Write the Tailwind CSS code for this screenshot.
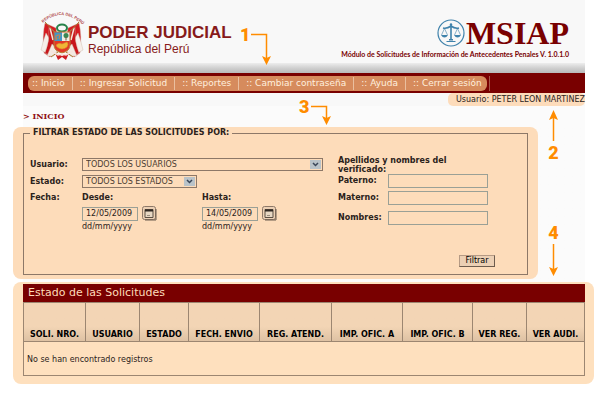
<!DOCTYPE html>
<html lang="es">
<head>
<meta charset="utf-8">
<meta name="viewport" content="width=device-width, initial-scale=1">
<title>MSIAP - Poder Judicial</title>
<script src="https://cdn.jsdelivr.net/npm/@tailwindcss/browser@4"></script>
</head>
<body class="relative min-h-screen bg-white font-['DejaVu_Sans',sans-serif] text-[8px] leading-[10px] text-[#2b221b]">
<div class="pl-[23px] pr-[15px]">
  <header class="flex h-[63px] items-start justify-between bg-[#f8f8f8] pl-[18px] pr-4">
    <div class="flex items-start gap-[5px] pt-[11px]">
      <svg class="h-[50px] w-[42px] overflow-visible" viewBox="0 0 42 50" role="img" aria-label="Escudo del Perú">
        <path id="arc" d="M2 12 Q21 -5 42 14" fill="none"/>
        <text class="font-['Liberation_Sans',sans-serif] text-[4px] font-bold" fill="#b0484a"><textPath href="#arc">REPÚBLICA DEL PERÚ</textPath></text>
        <g stroke="#c9b3a4" stroke-width=".4">
          <path d="M15 17 4 12Q1 24 3 42L9 46 18 38Z" fill="#d51c22"/>
          <path d="M27 17 38 12Q41 24 39 42L33 46 24 38Z" fill="#d51c22"/>
          <path d="M8 27 5 22Q2 30 0 39L7 43Q10 36 12 32Z" fill="#f6efe9"/>
          <path d="M34 27 37 22Q40 30 42 39L35 43Q32 36 30 32Z" fill="#f6efe9"/>
          <path d="M13 20 8 16Q9 30 4 42L10 45 16 35ZM29 20 34 16Q33 30 38 42L32 45 26 35Z" fill="#c8151b"/>
          <path d="M11 33 6 45 13 45 17 38ZM31 33 36 45 29 45 25 38Z" fill="#f3e9e2"/>
        </g>
        <path d="M9 17 12 29M33 17 30 29" stroke="#f3e3da" stroke-width="1.500"/>
        <path d="M4 11 15 23M38 11 27 23M10 46 17 41M32 46 25 41" stroke="#a77b2d" stroke-width="1"/>
        <ellipse cx="21" cy="17" rx="5" ry="3.5" fill="none" stroke="#27824a" stroke-width="2"/>
        <path d="M13 21H29V34Q29 40 21 42Q13 40 13 34Z" fill="#e33726" stroke="#b78436"/>
        <path d="M13.500 21.500H21V30H13.500Z" fill="#4097c6"/>
        <path d="M21 21.500H28.500V30H21Z" fill="#f0eee4"/>
        <path d="M15 28V25L17 24H19L18 28M16 27 15 29" stroke="#c8854c" fill="none" stroke-width="1.200"/>
        <circle cx="25" cy="24.500" r="2.500" fill="#398854"/>
        <path d="M25 26V29.500" stroke="#6d5836"/>
        <path d="M15 34Q18 31 21 33L26 31Q28 33 26 36 21 40 16 36Z" fill="#efb536" stroke="#d8892a" stroke-width=".6"/>
        <path d="M14 42 21 45 28 42 25 49 21 46 17 49Z" fill="#cf1c21"/>
        <path d="M10 40 17 44 21 43 25 44 32 40" stroke="#f6e4dc" stroke-width="1.500" fill="none"/>
      </svg>
      <div class="pt-[13px] font-['Liberation_Sans',sans-serif] text-[#871a1a]">
        <h1 class="text-[17px] leading-[18px] font-bold">PODER JUDICIAL</h1>
        <p class="text-[12px] leading-[15px]">República del Perú</p>
      </div>
    </div>
    <div class="pt-[17px] text-right text-[#790000]">
      <div class="flex items-center justify-end gap-px">
        <svg class="size-[28px]" viewBox="0 0 28 28" fill="none" stroke="#3f82ab" aria-hidden="true">
          <circle cx="14" cy="14" r="13" stroke-width="1.200"/>
          <path d="M14 5V21M6 9Q10 10 14 7Q18 10 22 9" stroke-width="1.600"/>
          <path d="M7.500 9.500 4.500 16M7.500 9.500 10.500 16M20.500 9.500 17.500 16M20.500 9.500 23.500 16" stroke-width=".6"/>
          <path d="M4 16H11Q9.500 18.500 7.500 18.500T4 16ZM17 16H24Q22.500 18.500 20.500 18.500T17 16ZM9.500 22H18.500V23H9.500ZM12 20H16V21.500H12Z" fill="#3f82ab" stroke="none"/>
          <circle cx="14" cy="5.500" r="1.200" fill="#3f82ab" stroke="none"/>
        </svg>
        <span class="font-['Liberation_Serif',serif] text-[32px] leading-[32px] font-bold">MSIAP</span>
      </div>
      <p class="font-['Lato',sans-serif] text-[7px] leading-[10px] font-bold whitespace-nowrap">Módulo de Solicitudes de Información de Antecedentes Penales V. 1.0.1.0</p>
    </div>
  </header>
  <div class="h-[10px] bg-linear-to-b from-[#ededed] via-[#d0d0d0] to-[#b9b9b9]"></div>
  <nav class="flex h-5 items-center bg-[#790000] pl-[5px]">
    <div class="flex h-[15px] items-center rounded-[6px] bg-[#d68b5d] text-[9px] leading-[13px] text-[#fff0df] whitespace-nowrap">
      <a href="#" class="border-r border-[#eabf9f] pr-[7px] pl-1">:: Inicio</a>
      <a href="#" class="border-r border-[#eabf9f] px-[7px]">:: Ingresar Solicitud</a>
      <a href="#" class="border-r border-[#eabf9f] px-[7px]">:: Reportes</a>
      <a href="#" class="border-r border-[#eabf9f] px-[7px]">:: Cambiar contraseña</a>
      <a href="#" class="border-r border-[#eabf9f] px-[7px]">:: Ayuda</a>
      <a href="#" class="pr-[5px] pl-[7px]">:: Cerrar sesión</a>
    </div>
    <div class="ml-[2px] h-[15px] border-r border-[#a8554a]"></div>
  </nav>
  <div class="flex h-[13px] justify-end bg-[#f8f8f8]">
    <p class="rounded-[5px] bg-[#fddcbb] pl-2 leading-[13px]">Usuario: PETER LEON MARTINEZ</p>
  </div>
  <div class="h-[21px] bg-[#fbfbfb] pt-[5px] font-['DejaVu_Serif',serif] font-bold text-[#910f12]">&gt; INICIO</div>
</div>

<main class="pr-[6px] pl-[13px]">
  <div class="mr-[9px] bg-linear-to-r from-transparent from-[10px] to-[#fbfbfb] to-[10px]">
    <form class="mr-[47px] rounded-[8px] bg-[#fddcba] px-[10px] pt-px pb-1">
      <fieldset class="h-[147px] border border-[#8d7868] px-[6px]">
        <legend class="px-[3px] font-bold">FILTRAR ESTADO DE LAS SOLICITUDES POR:</legend>
        <div class="flex">
          <div class="grid w-[308px] shrink-0 grid-cols-[52px_1fr] items-center gap-y-[4px] pt-5">
            <label for="usuario" class="font-bold">Usuario:</label>
            <div class="relative w-[241px]">
              <select id="usuario" class="block h-[13px] w-full appearance-none border border-[#8d7868] pl-[3px] leading-[11px] text-[#4b3c30]"><option>TODOS LOS USUARIOS</option></select>
              <svg class="pointer-events-none absolute top-[2px] right-[2px] h-[9px] w-[11px] bg-[#b9c3c9]" viewBox="0 0 11 9"><path d="M3 3 5.500 5.500 8 3" fill="none" stroke="#3a4658" stroke-width="1.500"/></svg>
            </div>
            <label for="estado" class="font-bold">Estado:</label>
            <div class="relative w-[115px]">
              <select id="estado" class="block h-[13px] w-full appearance-none border border-[#8d7868] pl-[3px] leading-[11px] text-[#4b3c30]"><option>TODOS LOS ESTADOS</option></select>
              <svg class="pointer-events-none absolute top-[2px] right-[2px] h-[9px] w-[11px] bg-[#b9c3c9]" viewBox="0 0 11 9"><path d="M3 3 5.500 5.500 8 3" fill="none" stroke="#3a4658" stroke-width="1.500"/></svg>
            </div>
            <span class="self-start pt-[1px] font-bold">Fecha:</span>
            <div class="flex pt-[1px]">
              <div class="w-[120px]">
                <label for="desde" class="block font-bold">Desde:</label>
                <div class="flex items-center gap-1 pt-[3px]">
                  <input id="desde" value="12/05/2009" class="h-[14px] w-[56px] border border-[#9aa096] px-[3px]">
                  <button type="button" aria-label="Calendario desde"><svg class="size-[15px]" viewBox="0 0 15 15"><rect x=".5" y=".5" width="13" height="13" rx="2" fill="#ecd0b4" stroke="#8d7868"/><path d="M14 3V14H3" fill="none" stroke="#6d5c4e"/><path d="M3 3.500H11V11.500H3Z" fill="#e8d8c4" stroke="#5b4e43"/><path d="M3 4.500H11" stroke="#302822" stroke-width="2"/><path d="M5 9.500H8" stroke="#9b8c7d"/></svg></button>
                </div>
                <p class="pt-[1px]">dd/mm/yyyy</p>
              </div>
              <div>
                <label for="hasta" class="block font-bold">Hasta:</label>
                <div class="flex items-center gap-1 pt-[3px]">
                  <input id="hasta" value="14/05/2009" class="h-[14px] w-[56px] border border-[#9aa096] px-[3px]">
                  <button type="button" aria-label="Calendario hasta"><svg class="size-[15px]" viewBox="0 0 15 15"><rect x=".5" y=".5" width="13" height="13" rx="2" fill="#ecd0b4" stroke="#8d7868"/><path d="M14 3V14H3" fill="none" stroke="#6d5c4e"/><path d="M3 3.500H11V11.500H3Z" fill="#e8d8c4" stroke="#5b4e43"/><path d="M3 4.500H11" stroke="#302822" stroke-width="2"/><path d="M5 9.500H8" stroke="#9b8c7d"/></svg></button>
                </div>
                <p class="pt-[1px]">dd/mm/yyyy</p>
              </div>
            </div>
          </div>
          <div class="pt-[18px]">
            <p class="w-[130px] leading-[9px] font-bold">Apellidos y nombres del verificado:</p>
            <div class="grid grid-cols-[50px_100px] items-center gap-y-[3px]">
              <label for="paterno" class="font-bold">Paterno:</label>
              <input id="paterno" class="h-[14px] border border-[#9aa096] px-[3px]">
              <label for="materno" class="font-bold">Materno:</label>
              <input id="materno" class="h-[14px] border border-[#9aa096] px-[3px]">
              <label for="nombres" class="pt-[3px] font-bold">Nombres:</label>
              <input id="nombres" class="mt-[3px] h-[14px] border border-[#9aa096] px-[3px]">
            </div>
          </div>
        </div>
        <div class="flex justify-end pt-[23px] pr-[26px]">
          <button type="button" class="h-[12px] w-9 border border-t-[#b59a84] border-r-[#6d5c4e] border-b-[#6d5c4e] border-l-[#b59a84] bg-[#ecd0b4] leading-[10px] whitespace-nowrap text-black">Filtrar</button>
        </div>
      </fieldset>
    </form>
    <div class="h-[3px]"></div>
  </div>

  <section class="rounded-[8px] bg-[#fee0be] pt-[2px] pr-[9px] pb-[8px] pl-[10px]">
    <table class="w-full table-fixed border-collapse border border-[#9c8671]">
      <caption class="h-[18px] bg-[#790000] pl-[5px] text-left text-[11px] leading-[18px] text-[#fddcba]">Estado de las Solicitudes</caption>
      <colgroup>
        <col class="w-[62px]"><col class="w-[54px]"><col class="w-[49px]"><col class="w-[71px]"><col class="w-[72px]"><col class="w-[71px]"><col class="w-[70px]"><col class="w-[54px]"><col class="w-[58px]">
      </colgroup>
      <thead>
        <tr class="h-[39px] bg-linear-to-b from-[#f3d5b5] from-60% to-[#dcc0a2] align-bottom whitespace-nowrap text-black">
          <th class="border border-[#9c8671] px-0 pb-px">SOLI. NRO.</th>
          <th class="border border-[#9c8671] px-0 pb-px">USUARIO</th>
          <th class="border border-[#9c8671] px-0 pb-px">ESTADO</th>
          <th class="border border-[#9c8671] px-0 pb-px">FECH. ENVIO</th>
          <th class="border border-[#9c8671] px-0 pb-px">REG. ATEND.</th>
          <th class="border border-[#9c8671] px-0 pb-px">IMP. OFIC. A</th>
          <th class="border border-[#9c8671] px-0 pb-px">IMP. OFIC. B</th>
          <th class="border border-[#9c8671] px-0 pb-px">VER REG.</th>
          <th class="border border-[#9c8671] px-0 pb-px">VER AUDI.</th>
        </tr>
      </thead>
      <tbody>
        <tr class="h-[34px]"><td colspan="9" class="pt-[2px] pl-[3px]">No se han encontrado registros</td></tr>
      </tbody>
    </table>
  </section>
</main>

<!-- Numbered callouts over the screen -->
<div class="pointer-events-none absolute top-[26px] left-[240px] flex gap-px font-['Roboto',sans-serif] text-[18px] leading-[17px] font-black text-[#ff8c00]">
  <span>1</span>
  <svg class="h-[40px] w-[22px]" viewBox="0 0 22 40"><path d="M0 8.500H15.500V32" fill="none" stroke="#ff8c00" stroke-width="1.500"/><path d="M11 30 15.500 32 20 30 15.500 39Z" fill="#ff8c00"/></svg>
</div>
<div class="pointer-events-none absolute top-[98px] left-[299px] flex gap-[2px] font-['Roboto',sans-serif] text-[18px] leading-[17px] font-black text-[#ff8c00]">
  <span>3</span>
  <svg class="h-[28px] w-[22px]" viewBox="0 0 22 28"><path d="M0 8.500H15.500V20" fill="none" stroke="#ff8c00" stroke-width="1.500"/><path d="M11 18 15.500 20 20 18 15.500 27Z" fill="#ff8c00"/></svg>
</div>
<div class="pointer-events-none absolute top-[110px] right-[41px] flex flex-col items-center gap-[3px] font-['Roboto',sans-serif] text-[18px] leading-[17px] font-black text-[#ff8c00]">
  <svg class="h-[31px] w-[11px]" viewBox="0 0 11 31"><path d="M5.500 8V31" stroke="#ff8c00" stroke-width="1.500"/><path d="M1 10 5.500 8 10 10 5.500 0Z" fill="#ff8c00"/></svg>
  <span>2</span>
</div>
<div class="pointer-events-none absolute top-[224px] right-[41px] flex flex-col items-center gap-[3px] font-['Roboto',sans-serif] text-[18px] leading-[17px] font-black text-[#ff8c00]">
  <span>4</span>
  <svg class="h-[32px] w-[11px]" viewBox="0 0 11 32"><path d="M5.500 0V25" stroke="#ff8c00" stroke-width="1.500"/><path d="M1 23 5.500 25 10 23 5.500 32Z" fill="#ff8c00"/></svg>
</div>
</body>
</html>
